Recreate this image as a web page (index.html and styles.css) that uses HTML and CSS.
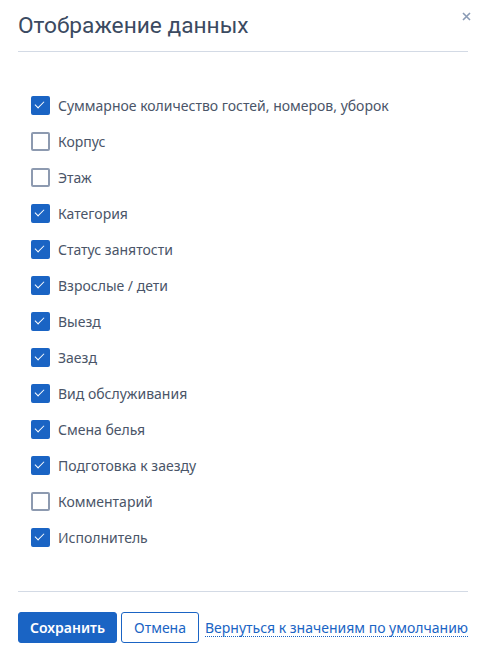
FILE: index.html
```html
<!DOCTYPE html>
<html>
<head>
    <meta charset="utf-8">
    <title>Отображение данных</title>
    <link rel="stylesheet" href="styles.css">
</head>
<body>
    <div class="modal">
        <div class="modal-header">
            <h2 class="modal-title">Отображение данных</h2>
            <button class="modal-close" title="Закрыть">
                <svg width="9" height="9" viewBox="0 0 9 9"><path d="M1 1L8 8M8 1L1 8" stroke="#8a9bb5" stroke-width="1.6"/></svg>
            </button>
        </div>

        <div class="modal-body">
            <label class="check"><input type="checkbox" checked><span class="box"></span>Суммарное количество гостей, номеров, уборок</label>
            <label class="check"><input type="checkbox"><span class="box"></span>Корпус</label>
            <label class="check"><input type="checkbox"><span class="box"></span>Этаж</label>
            <label class="check"><input type="checkbox" checked><span class="box"></span>Категория</label>
            <label class="check"><input type="checkbox" checked><span class="box"></span>Статус занятости</label>
            <label class="check"><input type="checkbox" checked><span class="box"></span>Взрослые / дети</label>
            <label class="check"><input type="checkbox" checked><span class="box"></span>Выезд</label>
            <label class="check"><input type="checkbox" checked><span class="box"></span>Заезд</label>
            <label class="check"><input type="checkbox" checked><span class="box"></span>Вид обслуживания</label>
            <label class="check"><input type="checkbox" checked><span class="box"></span>Смена белья</label>
            <label class="check"><input type="checkbox" checked><span class="box"></span>Подготовка к заезду</label>
            <label class="check"><input type="checkbox"><span class="box"></span>Комментарий</label>
            <label class="check"><input type="checkbox" checked><span class="box"></span>Исполнитель</label>
        </div>

        <div class="modal-footer">
            <button class="btn btn-primary">Сохранить</button>
            <button class="btn btn-outline">Отмена</button>
            <a class="link-reset" href="#">Вернуться к значениям по умолчанию</a>
        </div>
    </div>
</body>
</html>
```

FILE: styles.css
```css
body {
    margin: 0;
    background: #fff;
    font-family: "Noto Sans", "Open Sans", sans-serif;
    color: #4a5568;
}
.modal {
    width: 450px;
    padding: 0 18px;
}
.modal-header {
    position: relative;
    border-bottom: 1px solid #d3dae5;
    height: 51px;
}
.modal-title {
    margin: 0;
    padding-top: 11px;
    font-family: Roboto, sans-serif;
    font-weight: 400;
    font-size: 22.7px;
    line-height: 30px;
    color: #3b4a61;
}
.modal-close {
    position: absolute;
    right: -6px;
    top: 8px;
    width: 16px;
    height: 16px;
    padding: 0;
    border: none;
    background: none;
    display: flex;
    align-items: center;
    justify-content: center;
    cursor: pointer;
}
.modal-body {
    padding: 35px 0 36px 13px;
    border-bottom: 1px solid #d3dae5;
    display: flex;
    flex-direction: column;
}
.check {
    display: flex;
    align-items: center;
    height: 36px;
    font-size: 14px;
    color: #4a5568;
    cursor: pointer;
}
.check input {
    display: none;
}
.box {
    box-sizing: border-box;
    width: 19px;
    height: 19px;
    margin-right: 8px;
    border: 2px solid #8d9ab0;
    border-radius: 2px;
    position: relative;
    flex-shrink: 0;
}
.check input:checked + .box {
    background: #1a64c4;
    border-color: #1a64c4;
}
.check input:checked + .box::after {
    content: "";
    position: absolute;
    left: 4px;
    top: 1px;
    width: 4px;
    height: 8px;
    border: solid #fff;
    border-width: 0 1.6px 1.6px 0;
    transform: rotate(45deg);
}
.modal-footer {
    display: flex;
    align-items: center;
    gap: 4px;
    padding-top: 20px;
}
.btn {
    font-family: "Noto Sans", "Open Sans", sans-serif;
    font-size: 14px;
    height: 31px;
    border-radius: 3px;
    cursor: pointer;
}
.btn-primary {
    width: 99px;
    background: #1a64c4;
    border: 1px solid #1a64c4;
    color: #fff;
    font-weight: 600;
}
.btn-outline {
    width: 78px;
    background: #fff;
    border: 1px solid #1a64c4;
    color: #1a64c4;
}
.link-reset {
    margin-left: 2px;
    font-size: 14px;
    color: #1a64c4;
    text-decoration: none;
    border-bottom: 1px dotted #1a64c4;
    line-height: 17px;
}
```
